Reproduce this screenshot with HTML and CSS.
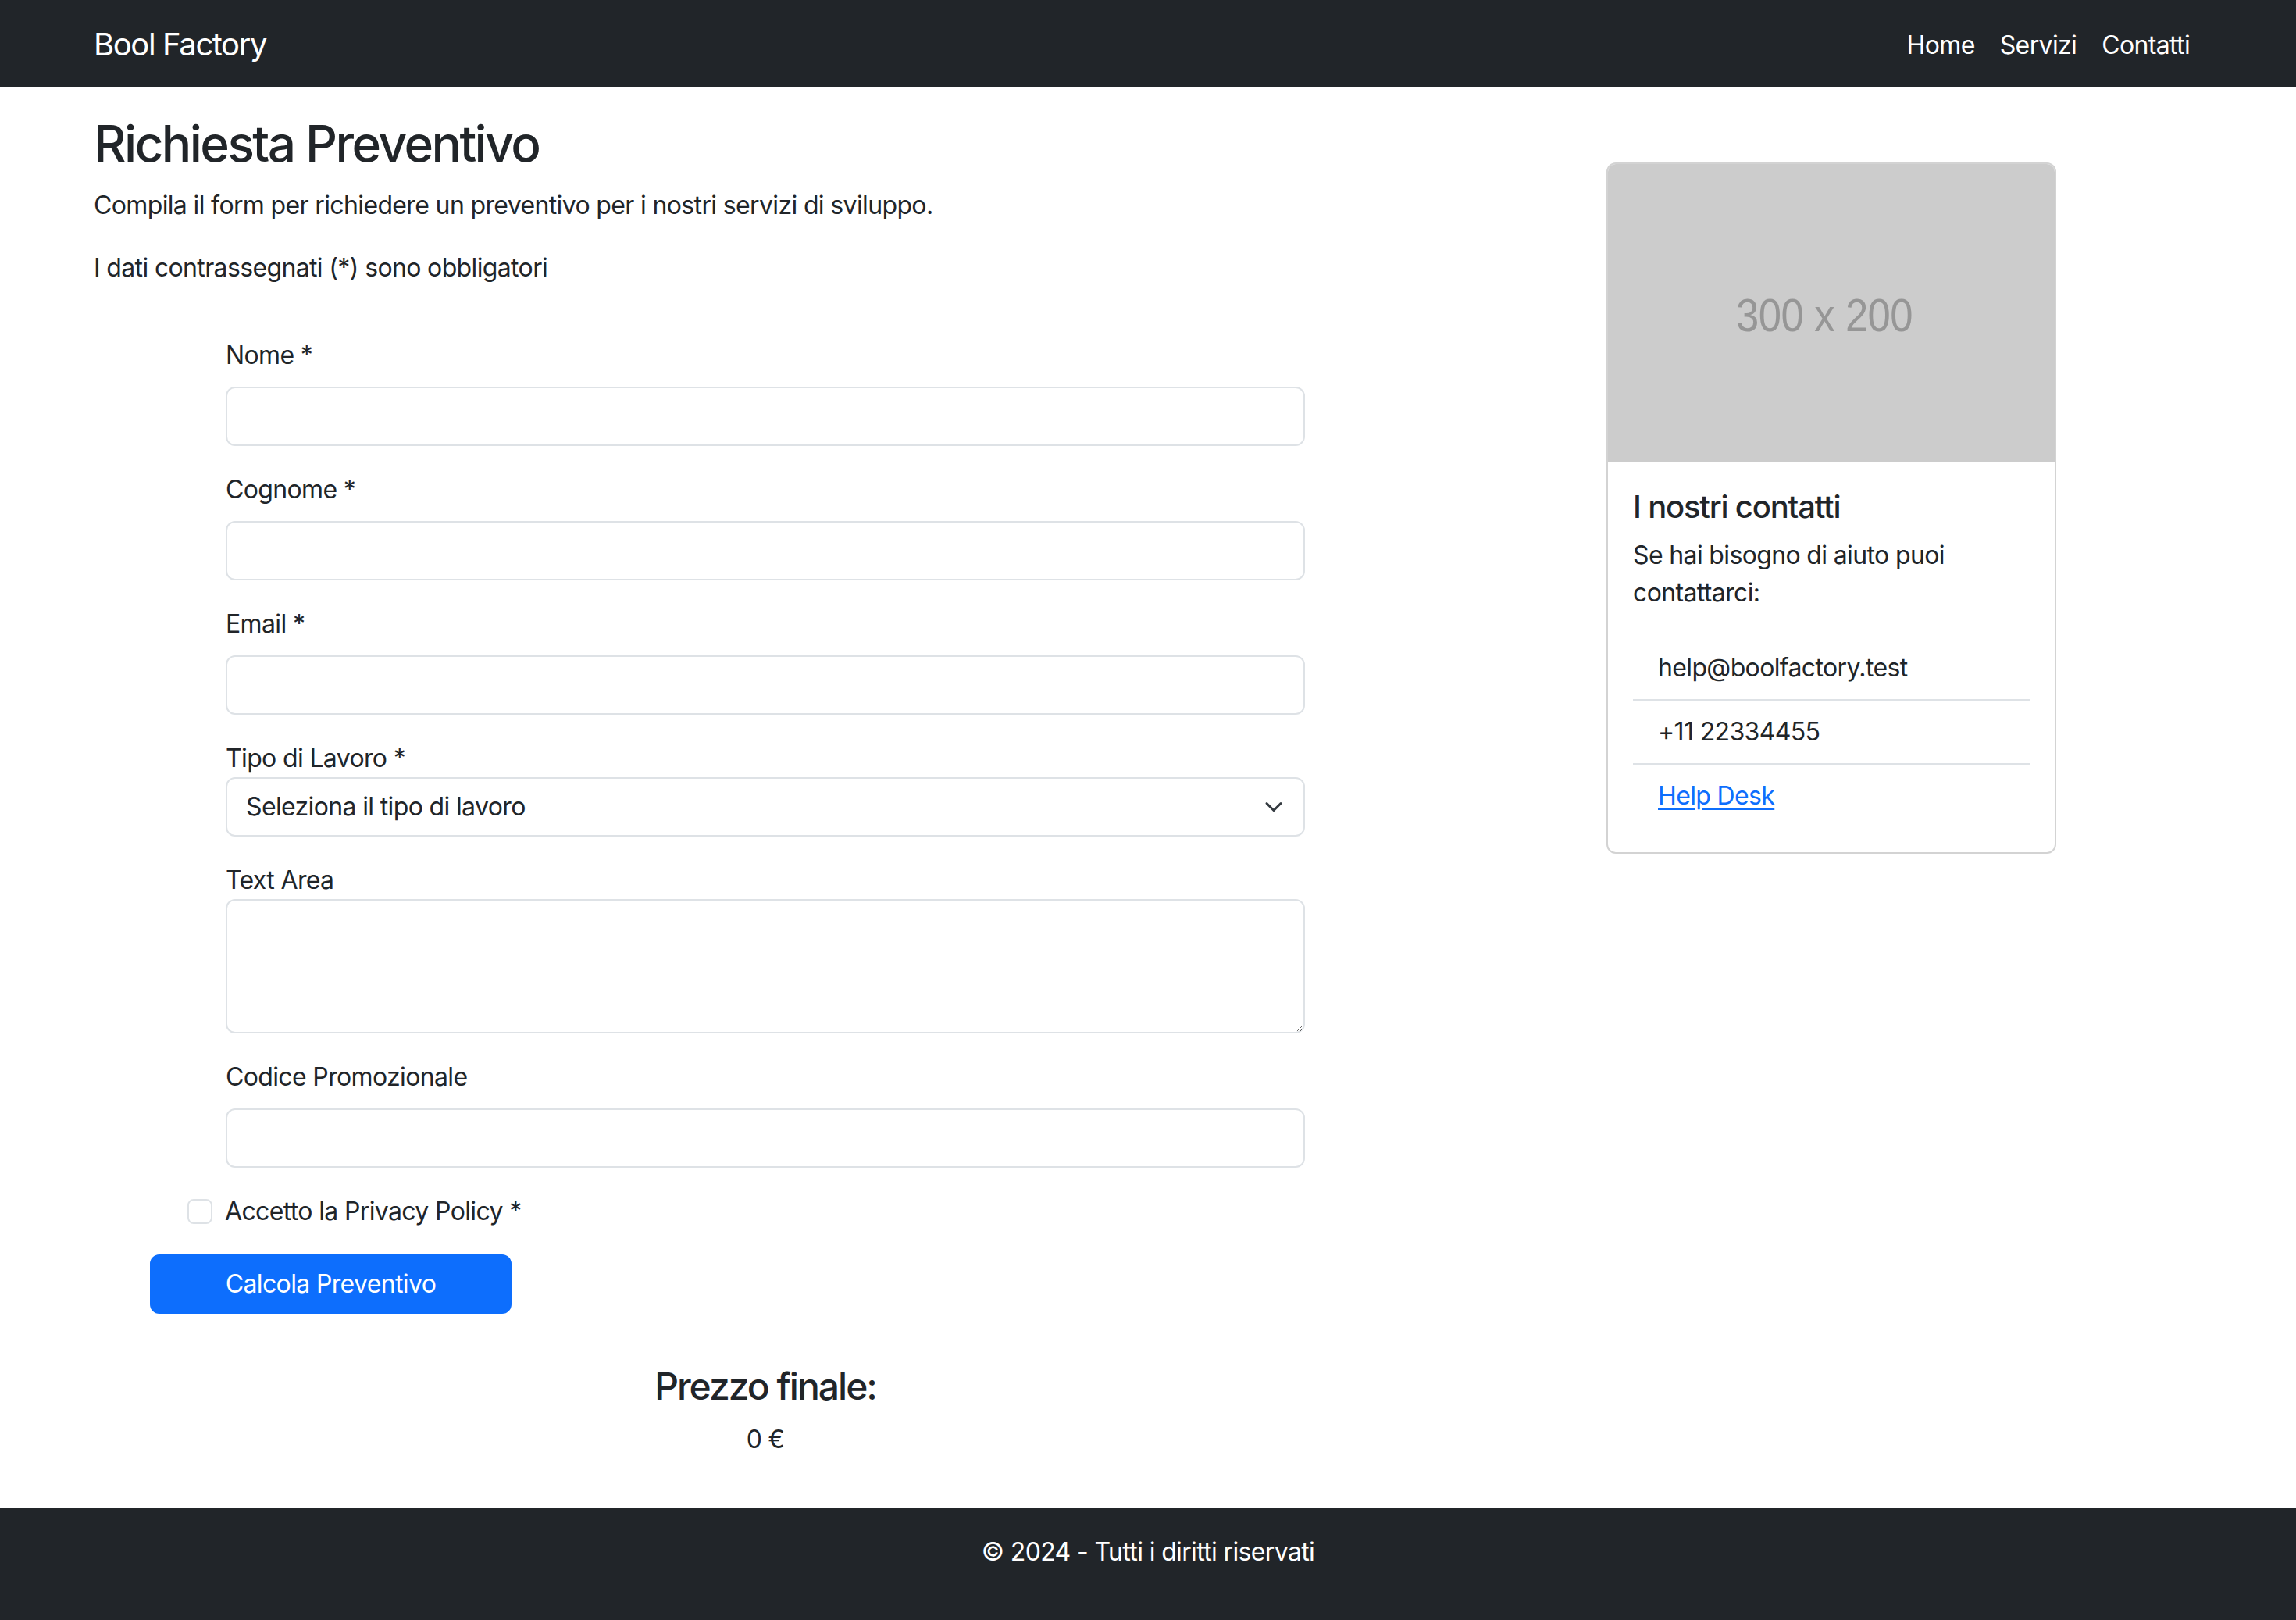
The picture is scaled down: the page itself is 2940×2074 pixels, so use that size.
FILE: index.html
```html
<!DOCTYPE html>
<html lang="it">
<head>
<meta charset="utf-8">
<title>Bool Factory - Richiesta Preventivo</title>
<link rel="stylesheet" href="styles.css">
</head>
<body>
<nav class="navbar">
  <a class="brand" href="#">Bool Factory</a>
  <ul class="nav-links">
    <li><a href="#">Home</a></li>
    <li><a href="#">Servizi</a></li>
    <li><a href="#">Contatti</a></li>
  </ul>
</nav>

<main class="page">
  <section class="main-col">
    <h1 class="title">Richiesta Preventivo</h1>
    <p class="text">Compila il form per richiedere un preventivo per i nostri servizi di sviluppo.</p>
    <p class="text">I dati contrassegnati (*) sono obbligatori</p>

    <form class="quote-form">
      <div class="field">
        <label class="form-label" for="nome">Nome *</label>
        <input class="control" id="nome" type="text">
      </div>
      <div class="field">
        <label class="form-label" for="cognome">Cognome *</label>
        <input class="control" id="cognome" type="text">
      </div>
      <div class="field">
        <label class="form-label" for="email">Email *</label>
        <input class="control" id="email" type="email">
      </div>
      <div class="field">
        <label class="plain-label" for="tipo">Tipo di Lavoro *</label>
        <div class="select-wrap">
          <select class="control select" id="tipo">
            <option>Seleziona il tipo di lavoro</option>
          </select>
          <svg class="chevron" width="32" height="24" viewBox="0 0 16 16" aria-hidden="true"><path fill="none" stroke="#343a40" stroke-linecap="round" stroke-linejoin="round" stroke-width="2" d="m2 5 6 6 6-6"/></svg>
        </div>
      </div>
      <div class="field">
        <label class="plain-label" for="testo">Text Area</label>
        <textarea class="control textarea" id="testo" rows="3"></textarea>
      </div>
      <div class="field">
        <label class="form-label" for="promo">Codice Promozionale</label>
        <input class="control" id="promo" type="text">
      </div>
      <div class="check">
        <input class="check-input" id="privacy" type="checkbox">
        <label class="check-label" for="privacy">Accetto la Privacy Policy *</label>
      </div>
      <button class="btn" type="button">Calcola Preventivo</button>
    </form>

    <div class="result">
      <h4 class="result-title">Prezzo finale:</h4>
      <p class="result-price">0 €</p>
    </div>
  </section>

  <aside class="side-col">
    <div class="card">
      <svg class="card-img" width="572" height="381" viewBox="0 0 572 381" aria-hidden="true">
        <rect width="572" height="381" fill="#cccccc"/>
        <text x="277" y="214" text-anchor="middle" font-family="Liberation Sans, Arial, sans-serif" font-size="60" fill="#969696" textLength="226" lengthAdjust="spacingAndGlyphs">300 x 200</text>
      </svg>
      <div class="card-body">
        <h5 class="card-title">I nostri contatti</h5>
        <p class="card-text">Se hai bisogno di aiuto puoi contattarci:</p>
        <ul class="list">
          <li class="list-item">help@boolfactory.test</li>
          <li class="list-item">+11 22334455</li>
          <li class="list-item"><a class="link" href="#">Help Desk</a></li>
        </ul>
      </div>
    </div>
  </aside>
</main>

<footer class="footer">
  <p class="footer-text">© 2024 - Tutti i diritti riservati</p>
</footer>
</body>
</html>
```

FILE: styles.css
```css
* { box-sizing: border-box; }

html, body {
  margin: 0;
  padding: 0;
}

body {
  font-family: Inter, "Noto Sans", "Liberation Sans", sans-serif;
  font-size: 32px;
  line-height: 48px;
  letter-spacing: -0.02em;
  color: #212529;
  background: #ffffff;
}

/* Navbar */
.navbar {
  height: 112px;
  background: #212529;
  display: flex;
  align-items: center;
  justify-content: space-between;
  padding: 0 120px 0 120px;
}

.brand {
  color: #ffffff;
  text-decoration: none;
  font-size: 40px;
  line-height: 60px;
  letter-spacing: -0.035em;
  padding-top: 2px;
}

.nav-links {
  list-style: none;
  margin: 0;
  padding: 0;
  display: flex;
}

.nav-links a {
  display: block;
  padding: 18px 16px 14px;
  color: #ffffff;
  text-decoration: none;
  font-size: 32px;
  line-height: 48px;
}

/* Page layout */
.page {
  display: flex;
  align-items: flex-start;
  padding: 0 120px;
}

.main-col {
  width: 1720px;
  flex: none;
}

.side-col {
  width: 576px;
  margin-left: 217px;
  margin-top: 96px;
  flex: none;
}

.title {
  margin: 34px 0 16px;
  font-size: 64px;
  font-weight: 500;
  line-height: 1.2;
  letter-spacing: -0.04em;
}

.text {
  margin: 0 0 32px;
}

/* Form */
.quote-form {
  padding-top: 32px;
  display: flex;
  flex-direction: column;
  align-items: flex-start;
}

.field {
  margin-left: 169px;
  width: 1382px;
  margin-bottom: 32px;
}

.form-label {
  display: block;
  margin-bottom: 16px;
}

.plain-label {
  display: block;
}

.control {
  display: block;
  width: 100%;
  height: 76px;
  padding: 12px 24px;
  font: inherit;
  letter-spacing: inherit;
  color: #212529;
  background: #ffffff;
  border: 2px solid #dee2e6;
  border-radius: 12px;
  outline: none;
}

.select-wrap {
  position: relative;
}

.select {
  appearance: none;
  -webkit-appearance: none;
  padding-right: 72px;
}

.chevron {
  position: absolute;
  right: 24px;
  top: 26px;
  pointer-events: none;
}

.textarea {
  height: 172px;
  resize: vertical;
}

.check {
  margin-left: 120px;
  padding-left: 48px;
  min-height: 48px;
  margin-bottom: 31px;
  display: flex;
  align-items: center;
}

.check-input {
  appearance: none;
  -webkit-appearance: none;
  width: 32px;
  height: 32px;
  margin: 0 16px 0 -48px;
  border: 2px solid #dee2e6;
  border-radius: 8px;
  background: #ffffff;
  flex: none;
}

.check-label {
  line-height: 48px;
}

.btn {
  margin-left: 72px;
  width: 463px;
  height: 76px;
  font: inherit;
  letter-spacing: inherit;
  color: #ffffff;
  background: #0d6efd;
  border: 2px solid #0d6efd;
  border-radius: 12px;
  padding: 12px 24px;
}

/* Result */
.result {
  margin-top: 64px;
  text-align: center;
}

.result-title {
  margin: 0 0 16px;
  font-size: 48px;
  font-weight: 500;
  line-height: 1.2;
  letter-spacing: -0.042em;
}

.result-price {
  margin: 0 0 64px;
}

/* Card */
.card {
  border: 2px solid #d3d3d3;
  border-radius: 12px;
  overflow: hidden;
  background: #ffffff;
}

.card-img {
  display: block;
}

.card-body {
  padding: 32px;
}

.card-title {
  margin: 0 0 16px;
  font-size: 40px;
  font-weight: 500;
  line-height: 48px;
  letter-spacing: -0.03em;
  padding-top: 2px;
  margin-bottom: 14px;
}

.card-text {
  margin: 0 0 32px;
}

.list {
  list-style: none;
  margin: 0;
  padding: 0;
}

.list-item {
  padding: 16px 32px;
  border-bottom: 2px solid #dee2e6;
}

.list-item:last-child {
  border-bottom: none;
}

.link {
  color: #0d6efd;
  text-decoration: underline;
  text-underline-offset: 4px;
}

/* Footer */
.footer {
  background: #212529;
  color: #ffffff;
  text-align: center;
  padding: 32px 0;
}

.footer-text {
  margin: 0 0 32px;
}
```
